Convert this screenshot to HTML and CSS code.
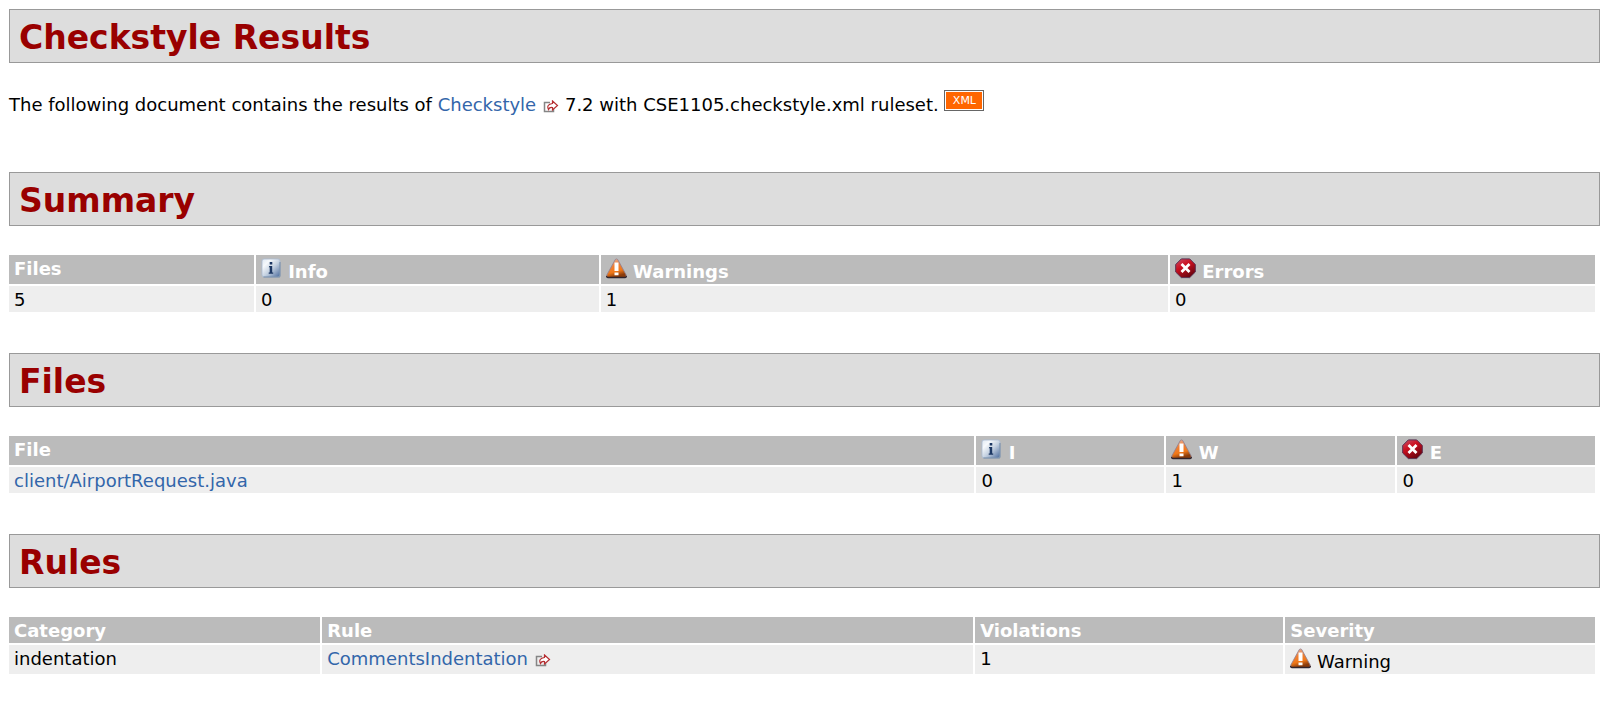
FILE: index.html
```html
<!DOCTYPE html>
<html lang="en">
<head>
<meta charset="utf-8">
<title>Checkstyle Results</title>
<link rel="stylesheet" href="styles.css">
</head>
<body>
<svg class="defs" aria-hidden="true">
  <defs>
    <linearGradient id="blue" x1="0" y1="0" x2="1" y2="1"><stop offset="0" stop-color="#dfe8f2"/><stop offset=".25" stop-color="#f6f9fc"/><stop offset=".55" stop-color="#c3d0e0"/><stop offset="1" stop-color="#4a6a9c"/></linearGradient>
    <linearGradient id="orange" x1="0" y1="0" x2="0.3" y2="1"><stop offset="0" stop-color="#e8b8a8"/><stop offset=".45" stop-color="#ef7f35"/><stop offset=".75" stop-color="#f07818"/><stop offset="1" stop-color="#8a3c0c"/></linearGradient>
    <linearGradient id="red" x1="0" y1="0" x2="0.6" y2="1"><stop offset="0" stop-color="#c8506a"/><stop offset=".45" stop-color="#cc1020"/><stop offset="1" stop-color="#6c0410"/></linearGradient>
    <symbol id="info" viewBox="0 0 21 21"><rect x="1" y="1" width="18" height="18" rx="2" fill="url(#blue)" stroke="#a9bad0" stroke-width=".8"/><path d="M2.500 19H18.500Q19 19 19 18V4" fill="none" stroke="#66809f" stroke-width=".8"/><path d="M8.200 8h3v6.500h1v1.200H7.700v-1.200h1V9.200h-.9zM8.700 4h2.600v2.600H8.700z" fill="#1c3763"/></symbol>
    <symbol id="warning" viewBox="0 0 21 21"><path d="M9.300 1.500Q10.500 .3 11.700 1.500L20.200 17Q20.700 19.500 19 19.500H2Q.3 19.500.8 17Z" fill="url(#orange)" stroke="#8f7f90" stroke-width=".8"/><path d="M.8 18Q.5 19.500 2 19.500H19Q20.500 19.500 20.200 18" fill="none" stroke="#30242c" stroke-width="1.400"/><path d="M8.500 4.500h4v8.500h-4zM8.500 14.500h4v2.800h-4z" fill="#fff"/></symbol>
    <symbol id="error" viewBox="0 0 21 21"><path d="M6.300.9h8.400L20.300 6.500v7.500L14.700 19.600H6.300L.7 14V6.500z" fill="url(#red)" stroke="#5a3050"/><path d="M6.500 6l8 8M14.500 6l-8 8" stroke="#fff" stroke-width="2.800"/></symbol>
    <symbol id="external" viewBox="0 0 16 13"><path d="M7 2.500H1.500v9h9V8.500" fill="none" stroke="#858585" stroke-width="1.500"/><path d="M9.500 1l5 4.500-5 4.500V7.500Q6.500 7 5.500 9.500 3 4.500 9.500 3.500z" fill="#fff" stroke="#b52d30" stroke-width="1.200"/></symbol>
  </defs>
</svg>
<main class="page">
  <section>
    <h2 class="heading">Checkstyle Results</h2>
    <p class="intro">The following document contains the results of <a class="link" href="#checkstyle">Checkstyle<svg class="external" aria-hidden="true"><use href="#external"/></svg></a> 7.2 with CSE1105.checkstyle.xml ruleset. <a class="xml" href="#xml">XML</a></p>
  </section>
  <section>
    <h2 class="heading">Summary</h2>
    <table class="grid">
      <colgroup><col class="s1"><col class="s2"><col class="s3"><col class="s4"></colgroup>
      <thead><tr><th>Files</th><th><svg class="icon" aria-hidden="true"><use href="#info"/></svg> Info</th><th><svg class="icon" aria-hidden="true"><use href="#warning"/></svg> Warnings</th><th><svg class="icon" aria-hidden="true"><use href="#error"/></svg> Errors</th></tr></thead>
      <tbody><tr><td>5</td><td>0</td><td>1</td><td>0</td></tr></tbody>
    </table>
  </section>
  <section>
    <h2 class="heading">Files</h2>
    <table class="grid">
      <colgroup><col class="f1"><col class="f2"><col class="f3"><col class="f4"></colgroup>
      <thead><tr><th>File</th><th><svg class="icon" aria-hidden="true"><use href="#info"/></svg> I</th><th><svg class="icon" aria-hidden="true"><use href="#warning"/></svg> W</th><th><svg class="icon" aria-hidden="true"><use href="#error"/></svg> E</th></tr></thead>
      <tbody><tr><td><a class="link" href="#airport-request">client/AirportRequest.java</a></td><td>0</td><td>1</td><td>0</td></tr></tbody>
    </table>
  </section>
  <section>
    <h2 class="heading">Rules</h2>
    <table class="grid">
      <colgroup><col class="r1"><col class="r2"><col class="r3"><col class="r4"></colgroup>
      <thead><tr><th>Category</th><th>Rule</th><th>Violations</th><th>Severity</th></tr></thead>
      <tbody><tr><td>indentation</td><td><a class="link" href="#comments-indentation">CommentsIndentation<svg class="external" aria-hidden="true"><use href="#external"/></svg></a></td><td>1</td><td><svg class="icon" aria-hidden="true"><use href="#warning"/></svg> Warning</td></tr></tbody>
    </table>
  </section>
</main>
</body>
</html>
```
FILE: styles.css
```css
body {
  margin: 0;
  background: #fff;
  color: #000;
  font: 18px/22px Verdana, "DejaVu Sans", sans-serif;
}

.defs {
  position: absolute;
  width: 0;
  height: 0;
}

.page {
  padding: 9px 2px 9px 9px;
}

.heading {
  margin: 0 0 27px;
  padding: 8px 9px 4px;
  border: 1px solid #999;
  background: #ddd;
  color: #900;
  font-size: 33px;
  line-height: 40px;
}

.intro {
  margin: 0 0 56px;
}

.link {
  color: #36a;
  text-decoration: none;
}

.external {
  width: 16px;
  height: 13px;
  margin-left: 7px;
  vertical-align: -2px;
}

/* Feed badge: clipping puts its bottom edge on the text baseline. */
.xml {
  display: inline-block;
  overflow: hidden;
  box-sizing: border-box;
  width: 40px;
  height: 21px;
  border: 1px solid #666;
  box-shadow: inset 0 0 0 1px #fff;
  background: #f60;
  color: #fff;
  font-size: 11px;
  line-height: 19px;
  text-align: center;
  text-decoration: none;
}

.grid {
  width: calc(100% - 1px);
  margin: 0 0 39px -2px;
  border-spacing: 2px;
  table-layout: fixed;
}

.grid th,
.grid td {
  padding: 3px 5px 1px;
  text-align: left;
  vertical-align: top;
}

.grid th {
  background: #bbb;
  color: #fff;
}

.grid td {
  background: #eee;
}

.icon {
  width: 21px;
  height: 21px;
  vertical-align: -1px;
}

.s1 { width: 15.5%; }
.s2 { width: 21.7%; }
.s3 { width: 35.9%; }
.s4 { width: 26.9%; }
.f1 { width: 61.1%; }
.f2 { width: 11.9%; }
.f3 { width: 14.5%; }
.f4 { width: 12.5%; }
.r1 { width: 19.7%; }
.r2 { width: 41.2%; }
.r3 { width: 19.5%; }
.r4 { width: 19.6%; }
```
